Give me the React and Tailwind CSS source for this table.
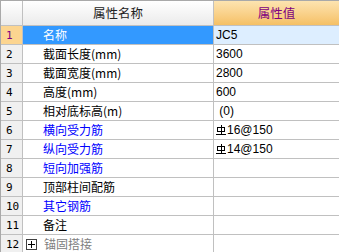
const rows = [
  { n: '1', name: '名称', value: 'JC5', sel: true },
  { n: '2', name: '截面长度(mm)', value: '3600' },
  { n: '3', name: '截面宽度(mm)', value: '2800' },
  { n: '4', name: '高度(mm)', value: '600' },
  { n: '5', name: '相对底标高(m)', value: ' (0)' },
  { n: '6', name: '横向受力筋', value: '16@150', blue: true, bar: true },
  { n: '7', name: '纵向受力筋', value: '14@150', blue: true, bar: true },
  { n: '8', name: '短向加强筋', value: '', blue: true },
  { n: '9', name: '顶部柱间配筋', value: '' },
  { n: '10', name: '其它钢筋', value: '', blue: true },
  { n: '11', name: '备注', value: '' },
  { n: '12', name: '锚固搭接', value: '', gray: true, plus: true },
]

function BarMark() {
  return (
    <svg width="10" height="11" viewBox="0 0 10 11" className="mr-[1px] inline-block" shapeRendering="crispEdges">
      <rect x="1.5" y="2.5" width="7" height="4" fill="none" stroke="#000" />
      <line x1="5" y1="0" x2="5" y2="9" stroke="#000" />
      <line x1="0" y1="9.5" x2="10" y2="9.5" stroke="#000" />
    </svg>
  )
}

function PlusBox() {
  return (
    <svg width="11" height="11" viewBox="0 0 11 11" className="shrink-0 ml-[3px] mr-[7px]" shapeRendering="crispEdges">
      <rect x="0.5" y="0.5" width="10" height="10" fill="#fff" stroke="#404040" />
      <line x1="2" y1="5.5" x2="9" y2="5.5" stroke="#000" />
      <line x1="5.5" y1="2" x2="5.5" y2="9" stroke="#000" />
    </svg>
  )
}

export default function App() {
  return (
    <div className="w-[339px] h-[252px] overflow-hidden bg-white border-l border-t border-[#a9a9a9] font-['Noto_Sans_CJK_SC',sans-serif] text-[12px] leading-none text-black">
      <div className="flex h-[25px] border-b border-[#c0c0c0]">
        <div className="w-[22px] shrink-0 border-r border-[#c0c0c0] bg-gradient-to-b from-[#ffffff] to-[#ebebeb]" />
        <div className="w-[191px] shrink-0 border-r border-[#c0c0c0] bg-gradient-to-b from-[#ffffff] to-[#ebebeb] flex items-center justify-center text-[12.5px] text-[#222]">
          属性名称
        </div>
        <div className="flex-1 bg-gradient-to-b from-[#fde4b0] to-[#f5c064] flex items-center justify-center text-[12.5px] text-[#800080]">
          属性值
        </div>
      </div>
      {rows.map((r) => (
        <div key={r.n} className="flex h-[19px] border-b border-[#c0c0c0]">
          <div
            className={`w-[22px] shrink-0 border-r border-[#c0c0c0] flex items-center pl-[5px] font-['DejaVu_Sans_Mono',monospace] text-[11px] ${
              r.sel ? 'bg-[#fcd590] text-[#800080]' : 'bg-[#f0f0f0] text-black'
            }`}
          >
            {r.n}
          </div>
          <div
            className={`w-[191px] shrink-0 border-r border-[#c0c0c0] flex items-center ${r.plus ? '' : 'pl-[20px]'} ${
              r.sel ? 'bg-[#3399ff] text-white' : r.blue ? 'text-[#0000ff]' : r.gray ? 'text-[#808080]' : ''
            }`}
          >
            {r.plus && <PlusBox />}
            <span>{r.name}</span>
          </div>
          <div
            className={`flex-1 flex items-center pl-[2px] font-['Liberation_Sans',sans-serif] whitespace-pre ${
              r.sel ? 'bg-[#ddeeff]' : ''
            }`}
          >
            {r.bar && <BarMark />}
            {r.value}
          </div>
        </div>
      ))}
    </div>
  )
}
